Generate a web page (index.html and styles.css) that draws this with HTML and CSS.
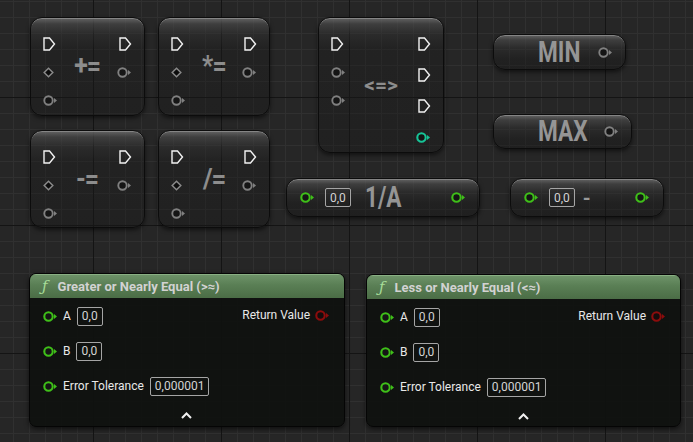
FILE: index.html
```html
<!DOCTYPE html>
<html>
<head>
<meta charset="utf-8">
<link rel="stylesheet" href="styles.css">
</head>
<body>
<div class="graph">

  <!-- += -->
  <div class="node compact n-add">
    <div class="pins">
      <span class="slot"><svg class="exec" width="13" height="14" viewBox="0 0 13 14"><path d="M1 1H6.5L11.5 7L6.5 13H1Z"/></svg></span>
      <span class="slot"><svg class="diamond" width="11" height="11" viewBox="0 0 11 11"><path d="M5.5 1.2L9.8 5.5L5.5 9.8L1.2 5.5Z"/></svg></span>
      <span class="slot"><svg class="data" width="15" height="11" viewBox="0 0 15 11"><circle cx="5.5" cy="5.5" r="4.2"/><path d="M11 3L14 5.5L11 8Z"/></svg></span>
    </div>
    <div class="title t-op">+=</div>
    <div class="pins right">
      <span class="slot"><svg class="exec" width="13" height="14" viewBox="0 0 13 14"><path d="M1 1H6.5L11.5 7L6.5 13H1Z"/></svg></span>
      <span class="slot"><svg class="data" width="15" height="11" viewBox="0 0 15 11"><circle cx="5.5" cy="5.5" r="4.2"/><path d="M11 3L14 5.5L11 8Z"/></svg></span>
    </div>
  </div>

  <!-- *= -->
  <div class="node compact n-mul">
    <div class="pins">
      <span class="slot"><svg class="exec" width="13" height="14" viewBox="0 0 13 14"><path d="M1 1H6.5L11.5 7L6.5 13H1Z"/></svg></span>
      <span class="slot"><svg class="diamond" width="11" height="11" viewBox="0 0 11 11"><path d="M5.5 1.2L9.8 5.5L5.5 9.8L1.2 5.5Z"/></svg></span>
      <span class="slot"><svg class="data" width="15" height="11" viewBox="0 0 15 11"><circle cx="5.5" cy="5.5" r="4.2"/><path d="M11 3L14 5.5L11 8Z"/></svg></span>
    </div>
    <div class="title t-op">*=</div>
    <div class="pins right">
      <span class="slot"><svg class="exec" width="13" height="14" viewBox="0 0 13 14"><path d="M1 1H6.5L11.5 7L6.5 13H1Z"/></svg></span>
      <span class="slot"><svg class="data" width="15" height="11" viewBox="0 0 15 11"><circle cx="5.5" cy="5.5" r="4.2"/><path d="M11 3L14 5.5L11 8Z"/></svg></span>
    </div>
  </div>

  <!-- -= -->
  <div class="node compact n-sub">
    <div class="pins">
      <span class="slot"><svg class="exec" width="13" height="14" viewBox="0 0 13 14"><path d="M1 1H6.5L11.5 7L6.5 13H1Z"/></svg></span>
      <span class="slot"><svg class="diamond" width="11" height="11" viewBox="0 0 11 11"><path d="M5.5 1.2L9.8 5.5L5.5 9.8L1.2 5.5Z"/></svg></span>
      <span class="slot"><svg class="data" width="15" height="11" viewBox="0 0 15 11"><circle cx="5.5" cy="5.5" r="4.2"/><path d="M11 3L14 5.5L11 8Z"/></svg></span>
    </div>
    <div class="title t-op">-=</div>
    <div class="pins right">
      <span class="slot"><svg class="exec" width="13" height="14" viewBox="0 0 13 14"><path d="M1 1H6.5L11.5 7L6.5 13H1Z"/></svg></span>
      <span class="slot"><svg class="data" width="15" height="11" viewBox="0 0 15 11"><circle cx="5.5" cy="5.5" r="4.2"/><path d="M11 3L14 5.5L11 8Z"/></svg></span>
    </div>
  </div>

  <!-- /= -->
  <div class="node compact n-div">
    <div class="pins">
      <span class="slot"><svg class="exec" width="13" height="14" viewBox="0 0 13 14"><path d="M1 1H6.5L11.5 7L6.5 13H1Z"/></svg></span>
      <span class="slot"><svg class="diamond" width="11" height="11" viewBox="0 0 11 11"><path d="M5.5 1.2L9.8 5.5L5.5 9.8L1.2 5.5Z"/></svg></span>
      <span class="slot"><svg class="data" width="15" height="11" viewBox="0 0 15 11"><circle cx="5.5" cy="5.5" r="4.2"/><path d="M11 3L14 5.5L11 8Z"/></svg></span>
    </div>
    <div class="title t-op t-slash">/=</div>
    <div class="pins right">
      <span class="slot"><svg class="exec" width="13" height="14" viewBox="0 0 13 14"><path d="M1 1H6.5L11.5 7L6.5 13H1Z"/></svg></span>
      <span class="slot"><svg class="data" width="15" height="11" viewBox="0 0 15 11"><circle cx="5.5" cy="5.5" r="4.2"/><path d="M11 3L14 5.5L11 8Z"/></svg></span>
    </div>
  </div>

  <!-- <=> -->
  <div class="node compact n-cmp">
    <div class="pins">
      <span class="slot"><svg class="exec" width="13" height="14" viewBox="0 0 13 14"><path d="M1 1H6.5L11.5 7L6.5 13H1Z"/></svg></span>
      <span class="slot"><svg class="data" width="15" height="11" viewBox="0 0 15 11"><circle cx="5.5" cy="5.5" r="4.2"/><path d="M11 3L14 5.5L11 8Z"/></svg></span>
      <span class="slot"><svg class="data" width="15" height="11" viewBox="0 0 15 11"><circle cx="5.5" cy="5.5" r="4.2"/><path d="M11 3L14 5.5L11 8Z"/></svg></span>
    </div>
    <div class="title t-cmp">&lt;=&gt;</div>
    <div class="pins right wide">
      <span class="slot"><svg class="exec" width="13" height="14" viewBox="0 0 13 14"><path d="M1 1H6.5L11.5 7L6.5 13H1Z"/></svg></span>
      <span class="slot"><svg class="exec" width="13" height="14" viewBox="0 0 13 14"><path d="M1 1H6.5L11.5 7L6.5 13H1Z"/></svg></span>
      <span class="slot"><svg class="exec" width="13" height="14" viewBox="0 0 13 14"><path d="M1 1H6.5L11.5 7L6.5 13H1Z"/></svg></span>
      <span class="slot"><svg class="data teal" width="15" height="11" viewBox="0 0 15 11"><circle cx="5.5" cy="5.5" r="4.2"/><path d="M11 3L14 5.5L11 8Z"/></svg></span>
    </div>
  </div>

  <!-- MIN -->
  <div class="node pill n-min">
    <span></span>
    <span class="big">MIN</span>
    <span class="end"><svg class="data" width="15" height="11" viewBox="0 0 15 11"><circle cx="5.5" cy="5.5" r="4.2"/><path d="M11 3L14 5.5L11 8Z"/></svg></span>
  </div>

  <!-- MAX -->
  <div class="node pill n-max">
    <span></span>
    <span class="big">MAX</span>
    <span class="end"><svg class="data" width="15" height="11" viewBox="0 0 15 11"><circle cx="5.5" cy="5.5" r="4.2"/><path d="M11 3L14 5.5L11 8Z"/></svg></span>
  </div>

  <!-- 1/A -->
  <div class="node pill flow n-inv">
    <svg class="data green" width="15" height="11" viewBox="0 0 15 11"><circle cx="5.5" cy="5.5" r="4.2"/><path d="M11 3L14 5.5L11 8Z"/></svg>
    <span class="val">0,0</span>
    <span class="big">1/A</span>
    <span class="spacer"></span>
    <svg class="data green" width="15" height="11" viewBox="0 0 15 11"><circle cx="5.5" cy="5.5" r="4.2"/><path d="M11 3L14 5.5L11 8Z"/></svg>
  </div>

  <!-- - -->
  <div class="node pill flow n-neg">
    <svg class="data green" width="15" height="11" viewBox="0 0 15 11"><circle cx="5.5" cy="5.5" r="4.2"/><path d="M11 3L14 5.5L11 8Z"/></svg>
    <span class="val">0,0</span>
    <span class="minus">-</span>
    <span class="spacer"></span>
    <svg class="data green" width="15" height="11" viewBox="0 0 15 11"><circle cx="5.5" cy="5.5" r="4.2"/><path d="M11 3L14 5.5L11 8Z"/></svg>
  </div>

  <!-- Greater or Nearly Equal -->
  <div class="fn n-ge">
    <div class="fn-head"><span class="fx">ƒ</span><span>Greater or Nearly Equal (&gt;≈)</span></div>
    <div class="fn-body">
      <div class="fn-rows">
        <div class="row"><svg class="data green" width="15" height="11" viewBox="0 0 15 11"><circle cx="5.5" cy="5.5" r="4.2"/><path d="M11 3L14 5.5L11 8Z"/></svg><span class="lbl">A</span><span class="val">0,0</span></div>
        <div class="row"><svg class="data green" width="15" height="11" viewBox="0 0 15 11"><circle cx="5.5" cy="5.5" r="4.2"/><path d="M11 3L14 5.5L11 8Z"/></svg><span class="lbl">B</span><span class="val">0,0</span></div>
        <div class="row"><svg class="data green" width="15" height="11" viewBox="0 0 15 11"><circle cx="5.5" cy="5.5" r="4.2"/><path d="M11 3L14 5.5L11 8Z"/></svg><span class="lbl">Error Tolerance</span><span class="val">0,000001</span></div>
      </div>
      <div class="ret"><span class="lbl">Return Value</span><svg class="data red" width="15" height="11" viewBox="0 0 15 11"><circle cx="5.5" cy="5.5" r="4.2"/><path d="M11 3L14 5.5L11 8Z"/></svg></div>
      <svg class="chev" width="11" height="7" viewBox="0 0 11 7"><path d="M1 6L5.5 1.5L10 6"/></svg>
    </div>
  </div>

  <!-- Less or Nearly Equal -->
  <div class="fn n-le">
    <div class="fn-head"><span class="fx">ƒ</span><span>Less or Nearly Equal (&lt;≈)</span></div>
    <div class="fn-body">
      <div class="fn-rows">
        <div class="row"><svg class="data green" width="15" height="11" viewBox="0 0 15 11"><circle cx="5.5" cy="5.5" r="4.2"/><path d="M11 3L14 5.5L11 8Z"/></svg><span class="lbl">A</span><span class="val">0,0</span></div>
        <div class="row"><svg class="data green" width="15" height="11" viewBox="0 0 15 11"><circle cx="5.5" cy="5.5" r="4.2"/><path d="M11 3L14 5.5L11 8Z"/></svg><span class="lbl">B</span><span class="val">0,0</span></div>
        <div class="row"><svg class="data green" width="15" height="11" viewBox="0 0 15 11"><circle cx="5.5" cy="5.5" r="4.2"/><path d="M11 3L14 5.5L11 8Z"/></svg><span class="lbl">Error Tolerance</span><span class="val">0,000001</span></div>
      </div>
      <div class="ret"><span class="lbl">Return Value</span><svg class="data red" width="15" height="11" viewBox="0 0 15 11"><circle cx="5.5" cy="5.5" r="4.2"/><path d="M11 3L14 5.5L11 8Z"/></svg></div>
      <svg class="chev" width="11" height="7" viewBox="0 0 11 7"><path d="M1 6L5.5 1.5L10 6"/></svg>
    </div>
  </div>

</div>
</body>
</html>
```

FILE: styles.css
```css
* { box-sizing: border-box; }

html, body {
  margin: 0;
  padding: 0;
  width: 693px;
  height: 442px;
  overflow: hidden;
  background: #262626;
  font-family: Roboto, "Liberation Sans", sans-serif;
}

.graph {
  position: relative;
  width: 693px;
  height: 442px;
  background-color: #262626;
  background-image:
    linear-gradient(to right, #141414 1px, transparent 1px),
    linear-gradient(to bottom, #141414 1px, transparent 1px),
    linear-gradient(to right, #303030 1px, transparent 1px),
    linear-gradient(to bottom, #303030 1px, transparent 1px);
  background-size: 128px 128px, 128px 128px, 16px 16px, 16px 16px;
  background-position: 93px 0, 0 97px, 13px 0, 0 1px;
}

/* ---------- pins ---------- */
svg { display: block; }

.exec path {
  fill: none;
  stroke: #f2f2f2;
  stroke-width: 1.4;
}

.diamond path {
  fill: #0c0c0c;
  stroke: #8a8a8a;
  stroke-width: 1.5;
}

.data { color: #808080; }
.data circle {
  fill: #151515;
  stroke: currentColor;
  stroke-width: 1.9;
}
.data path { fill: currentColor; }
.data.green { color: #3fbf19; }
.data.green circle { stroke-width: 2.1; }
.data.teal { color: #17c497; }
.data.teal circle { stroke-width: 2.1; }
.data.red { color: #8c0c0c; }
.data.red circle { stroke-width: 2.1; fill: #140c0c; }

/* ---------- compact nodes ---------- */
.node {
  position: absolute;
  background:
    linear-gradient(to bottom,
      rgba(115,115,115,0.8) 0px,
      rgba(75,75,75,0.65) 6px,
      rgba(48,48,48,0.5) 16px,
      rgba(28,28,28,0.38) 30px,
      rgba(24,24,24,0.38) 100%);
  border: 1px solid #0c0c0c;
  box-shadow:
    inset 0 1px 0 rgba(200,200,200,0.35),
    0 2px 4px rgba(0,0,0,0.55);
}

.compact {
  display: grid;
  grid-template-columns: auto 1fr auto;
  border-radius: 12px;
  padding: 0 12px 0 12px;
}

.pins {
  display: flex;
  flex-direction: column;
  gap: 14px;
  padding-top: 19px;
}
.pins.right { align-items: flex-end; }
.pins.wide { gap: 17px; }

.slot {
  height: 14px;
  display: flex;
  align-items: center;
}

.compact .title {
  align-self: center;
  justify-self: center;
  color: #8d8d8d;
  font-weight: 700;
  line-height: 1;
}

.t-op {
  font-size: 27px;
  letter-spacing: -1px;
  transform: scaleX(0.92);
}
.t-slash { font-size: 28px; }
.t-cmp {
  font-size: 21px;
  letter-spacing: 0;
}

.n-add { left: 30px; top: 17px; width: 115px; height: 99px; }
.n-mul { left: 158px; top: 17px; width: 112px; height: 99px; }
.n-sub { left: 30px; top: 130px; width: 115px; height: 98px; }
.n-div { left: 158px; top: 130px; width: 112px; height: 98px; }
.n-cmp { left: 318px; top: 17px; width: 126px; height: 136px; }

/* ---------- pill nodes ---------- */
.pill {
  border-radius: 12px;
  display: grid;
  grid-template-columns: 1fr auto 1fr;
  align-items: center;
  padding: 0 12px;
  background:
    linear-gradient(to bottom,
      rgba(115,115,115,0.8) 0px,
      rgba(75,75,75,0.65) 5px,
      rgba(48,48,48,0.5) 13px,
      rgba(26,26,26,0.42) 24px,
      rgba(22,22,22,0.42) 100%);
}
.pill .end { justify-self: end; }

.big {
  color: #959595;
  font-weight: 700;
  font-size: 29px;
  line-height: 1;
  display: inline-block;
  transform: scaleX(0.78);
}

.n-min { left: 493px; top: 34px; width: 133px; height: 36px; }
.n-max { left: 493px; top: 114px; width: 139px; height: 35px; }

.flow {
  display: flex;
  align-items: center;
  padding: 0 13px;
}
.flow .spacer { flex: 1; }

.n-inv { left: 286px; top: 178px; width: 194px; height: 39px; }
.n-inv .val { margin-left: 10px; }
.n-inv .big { margin-left: 14px; transform-origin: left center; }

.n-neg { left: 510px; top: 178px; width: 154px; height: 39px; }
.n-neg .val { margin-left: 10px; }
.minus {
  color: #9a9a9a;
  font-weight: 700;
  font-size: 20px;
  margin-left: 8px;
  line-height: 1;
}

/* ---------- value box ---------- */
.val {
  display: inline-flex;
  align-items: center;
  height: 19px;
  padding: 0 4px;
  border: 1px solid #a5a5a5;
  border-radius: 2px;
  color: #d4d4d4;
  font-size: 12px;
  line-height: 1;
}

/* ---------- function nodes ---------- */
.fn {
  position: absolute;
  border-radius: 7px;
  background: rgba(15,17,15,0.93);
  border: 1px solid #050505;
  box-shadow: 0 2px 5px rgba(0,0,0,0.6);
  overflow: hidden;
}
.n-ge { left: 29px; top: 273px; width: 316px; height: 154px; }
.n-le { left: 366px; top: 274px; width: 315px; height: 153px; }

.fn-head {
  height: 24px;
  display: flex;
  align-items: center;
  gap: 10px;
  padding-left: 12px;
  background: linear-gradient(to bottom, #6f946a 0%, #5a7f55 45%, #4b6d46 100%);
  box-shadow: inset 0 1px 0 rgba(190,230,180,0.35);
  color: #d2d2d2;
  font-weight: 700;
  font-size: 13px;
}
.fx {
  font-family: "DejaVu Serif", "Liberation Serif", serif;
  font-style: italic;
  font-weight: 400;
  font-size: 15px;
  color: #a6dc98;
}

.fn-body {
  display: grid;
  grid-template-columns: 1fr auto;
  padding: 8px 14px 0 13px;
}

.fn-rows {
  display: flex;
  flex-direction: column;
  gap: 15px;
}

.row {
  height: 20px;
  display: flex;
  align-items: center;
}
.row .lbl { margin-left: 5px; margin-right: 6px; }

.lbl {
  color: #e8e8e8;
  font-size: 12px;
}

.ret {
  height: 18px;
  margin-top: 0;
  display: flex;
  align-items: center;
  gap: 5px;
}

.chev {
  grid-column: 1 / 3;
  justify-self: center;
  margin-top: 16px;
}
.chev path {
  fill: none;
  stroke: #f0f0f0;
  stroke-width: 2;
}
```
